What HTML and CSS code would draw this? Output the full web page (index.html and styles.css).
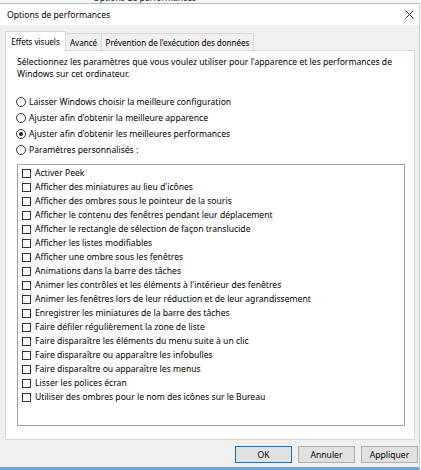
FILE: index.html
```html
<!DOCTYPE html>
<html lang="fr">
<head>
<meta charset="utf-8">
<title>Options de performances</title>
<link rel="stylesheet" href="styles.css">
</head>
<body>
<div class="behind"><span class="behind-title">Options de performances</span></div>
<div class="window">
  <div class="titlebar">
    <span class="title">Options de performances</span>
    <svg class="close" width="9" height="9" viewBox="0 0 9 9"><path d="M0.5 0.5 L8.5 8.5 M8.5 0.5 L0.5 8.5" stroke="#2b2b2b" stroke-width="1" fill="none"/></svg>
  </div>
  <div class="client">
    <div class="tabs">
      <div class="tab active t1">Effets visuels</div>
      <div class="tab t2">Avancé</div>
      <div class="tab t3">Prévention de l'exécution des données</div>
    </div>
    <div class="panel">
      <p class="desc">Sélectionnez les paramètres que vous voulez utiliser pour l'apparence et les performances de<br>Windows sur cet ordinateur.</p>
      <div class="radios">
        <div class="radio-row"><span class="radio"></span><span>Laisser Windows choisir la meilleure configuration</span></div>
        <div class="radio-row"><span class="radio"></span><span>Ajuster afin d'obtenir la meilleure apparence</span></div>
        <div class="radio-row"><span class="radio checked"></span><span>Ajuster afin d'obtenir les meilleures performances</span></div>
        <div class="radio-row"><span class="radio"></span><span>Paramètres personnalisés :</span></div>
      </div>
      <div class="listbox">
        <div class="item"><span class="cb"></span><span>Activer Peek</span></div>
        <div class="item"><span class="cb"></span><span>Afficher des miniatures au lieu d'icônes</span></div>
        <div class="item"><span class="cb"></span><span>Afficher des ombres sous le pointeur de la souris</span></div>
        <div class="item"><span class="cb"></span><span>Afficher le contenu des fenêtres pendant leur déplacement</span></div>
        <div class="item"><span class="cb"></span><span>Afficher le rectangle de sélection de façon translucide</span></div>
        <div class="item"><span class="cb"></span><span>Afficher les listes modifiables</span></div>
        <div class="item"><span class="cb"></span><span>Afficher une ombre sous les fenêtres</span></div>
        <div class="item"><span class="cb"></span><span>Animations dans la barre des tâches</span></div>
        <div class="item"><span class="cb"></span><span>Animer les contrôles et les éléments à l'intérieur des fenêtres</span></div>
        <div class="item"><span class="cb"></span><span>Animer les fenêtres lors de leur réduction et de leur agrandissement</span></div>
        <div class="item"><span class="cb"></span><span>Enregistrer les miniatures de la barre des tâches</span></div>
        <div class="item"><span class="cb"></span><span>Faire défiler régulièrement la zone de liste</span></div>
        <div class="item"><span class="cb"></span><span>Faire disparaître les éléments du menu suite à un clic</span></div>
        <div class="item"><span class="cb"></span><span>Faire disparaître ou apparaître les infobulles</span></div>
        <div class="item"><span class="cb"></span><span>Faire disparaître ou apparaître les menus</span></div>
        <div class="item"><span class="cb"></span><span>Lisser les polices écran</span></div>
        <div class="item"><span class="cb"></span><span>Utiliser des ombres pour le nom des icônes sur le Bureau</span></div>
      </div>
    </div>
    <div class="buttons">
      <div class="btn default">OK</div>
      <div class="btn">Annuler</div>
      <div class="btn">Appliquer</div>
    </div>
  </div>
</div>
</body>
</html>
```
FILE: styles.css
```css
html, body {
  margin: 0;
  padding: 0;
}
body {
  width: 421px;
  height: 470px;
  overflow: hidden;
  background: #ffffff;
  font-family: "Noto Sans", "Open Sans", sans-serif;
  font-size: 8.6px;
  color: #000;
}
.behind {
  height: 3px;
  overflow: hidden;
  background: #f6f6f6;
}
.behind-title {
  display: block;
  margin-left: 93px;
  margin-top: -8px;
  line-height: 12px;
  color: #222;
  white-space: nowrap;
}
.window {
  width: 420px;
  height: 467px;
  box-sizing: border-box;
  border-top: 1px solid #aabdd2;
  border-right: 1px solid #cfcfcf;
  border-bottom: 3px solid #6aa7e2;
  display: flex;
  flex-direction: column;
  background: #f0f0f0;
}
.titlebar {
  height: 21px;
  flex: none;
  background: #ffffff;
  display: flex;
  align-items: center;
  justify-content: space-between;
  padding: 0 5px 0 7px;
}
.title {
  white-space: nowrap;
}
.close {
  display: block;
}
.client {
  flex: 1;
  padding: 6px 1px 0 5px;
  display: flex;
  flex-direction: column;
}
.tabs {
  display: flex;
  align-items: flex-end;
  height: 19px;
}
.tab {
  height: 17px;
  box-sizing: border-box;
  border: 1px solid #d9d9d9;
  border-bottom: none;
  border-left: none;
  display: flex;
  align-items: center;
  justify-content: center;
  white-space: nowrap;
  background: #f0f0f0;
  font-size: 8.1px;
  letter-spacing: -0.05px;
}
.t1 { width: 61px; }
.t2 { width: 36px; }
.t3 { width: 152px; }
.tab.active {
  height: 20px;
  margin-bottom: -1px;
  border-left: 1px solid #d9d9d9;
  background: #ffffff;
  position: relative;
  z-index: 1;
  padding-bottom: 1px;
}
.panel {
  width: 410px;
  height: 390px;
  box-sizing: border-box;
  border: 1px solid #d9d9d9;
  background: #ffffff;
  padding: 6px 0 0 11px;
}
.desc {
  margin: 0;
  line-height: 11.5px;
  white-space: nowrap;
}
.radios {
  margin-top: 14px;
  margin-left: -1px;
}
.radio-row {
  height: 16px;
  display: flex;
  align-items: center;
  white-space: nowrap;
}
.radio {
  width: 10px;
  height: 10px;
  box-sizing: border-box;
  border: 1px solid #333;
  border-radius: 50%;
  margin-right: 3px;
  display: flex;
  align-items: center;
  justify-content: center;
  flex: none;
}
.radio.checked::after {
  content: "";
  width: 4px;
  height: 4px;
  border-radius: 50%;
  background: #222;
}
.listbox {
  margin-top: 6px;
  width: 388px;
  height: 262px;
  box-sizing: border-box;
  border: 1px solid #a0a0a0;
  background: #fff;
  padding: 1px 0 0 4px;
}
.item {
  height: 14px;
  display: flex;
  align-items: center;
  white-space: nowrap;
}
.cb {
  width: 9px;
  height: 9px;
  box-sizing: border-box;
  border: 1px solid #333;
  margin-right: 4px;
  flex: none;
}
.buttons {
  margin-top: 6px;
  display: flex;
  justify-content: flex-end;
  gap: 6px;
}
.btn {
  width: 57px;
  height: 17px;
  box-sizing: border-box;
  border: 1px solid #adadad;
  background: #e1e1e1;
  display: flex;
  align-items: center;
  justify-content: center;
}
.btn.default {
  border-color: #0078d7;
}
```
